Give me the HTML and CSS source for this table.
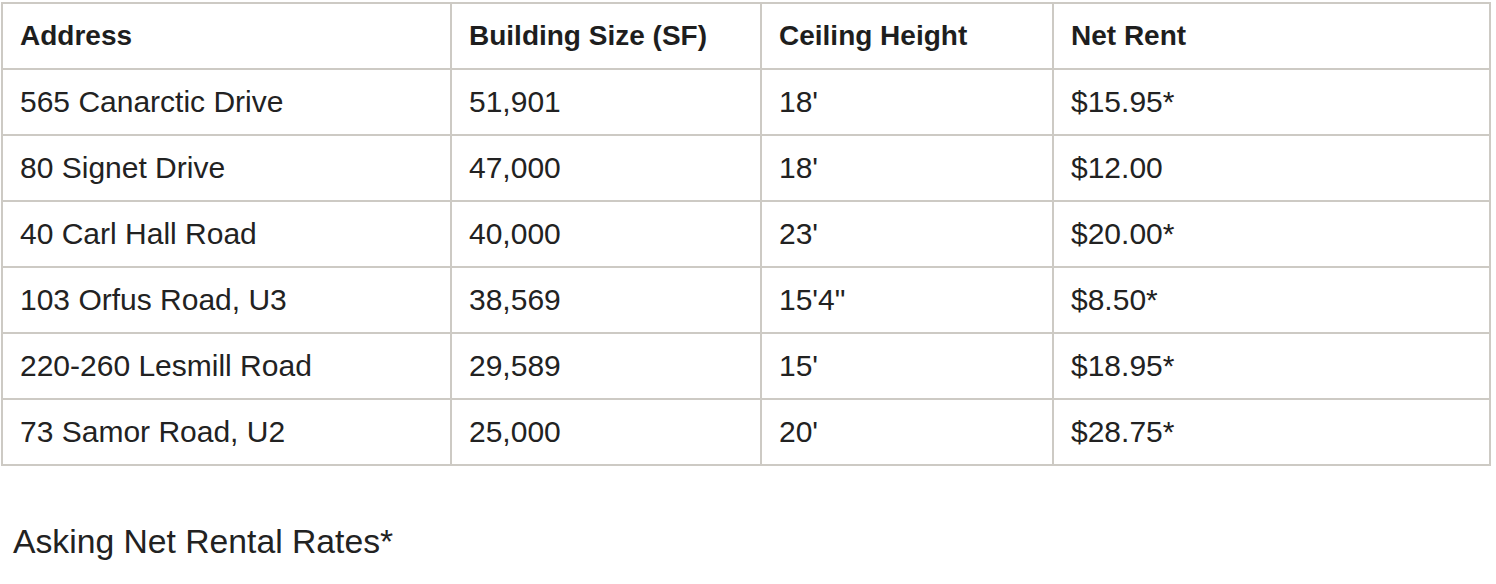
FILE: index.html
```html
<!DOCTYPE html>
<html lang="en">
<head>
<meta charset="utf-8">
<title>Properties</title>
<link rel="stylesheet" href="styles.css">
</head>
<body>
<div class="page">
  <table class="listing">
    <colgroup>
      <col class="c1"><col class="c2"><col class="c3"><col class="c4">
    </colgroup>
    <thead>
      <tr><th>Address</th><th>Building Size (SF)</th><th>Ceiling Height</th><th>Net Rent</th></tr>
    </thead>
    <tbody>
      <tr><td>565 Canarctic Drive</td><td>51,901</td><td>18'</td><td>$15.95*</td></tr>
      <tr><td>80 Signet Drive</td><td>47,000</td><td>18'</td><td>$12.00</td></tr>
      <tr><td>40 Carl Hall Road</td><td>40,000</td><td>23'</td><td>$20.00*</td></tr>
      <tr><td>103 Orfus Road, U3</td><td>38,569</td><td>15'4"</td><td>$8.50*</td></tr>
      <tr><td>220-260 Lesmill Road</td><td>29,589</td><td>15'</td><td>$18.95*</td></tr>
      <tr><td>73 Samor Road, U2</td><td>25,000</td><td>20'</td><td>$28.75*</td></tr>
    </tbody>
  </table>
  <p class="note">Asking Net Rental Rates*</p>
</div>
</body>
</html>
```

FILE: styles.css
```css
html, body {
  margin: 0;
  padding: 0;
  background: #ffffff;
}
body {
  font-family: "Liberation Sans", Arial, sans-serif;
  color: #222222;
}
.page {
  padding: 2px 0 0 1px;
}
.listing {
  border-collapse: collapse;
  width: 1490px;
  table-layout: fixed;
}
.c1 { width: 449px; }
.c2 { width: 310px; }
.c3 { width: 292px; }
.c4 { width: 437px; }
.listing th,
.listing td {
  border: 2px solid #cdcac4;
  height: 66px;
  padding: 0 17px;
  text-align: left;
  vertical-align: middle;
  box-sizing: border-box;
}
.listing th {
  font-size: 28px;
  font-weight: 700;
  color: #1e1e1e;
}
.listing td {
  font-size: 30px;
  font-weight: 400;
}
.note {
  margin: 55px 0 0 12px;
  font-size: 33.7px;
  line-height: 40px;
}
```
